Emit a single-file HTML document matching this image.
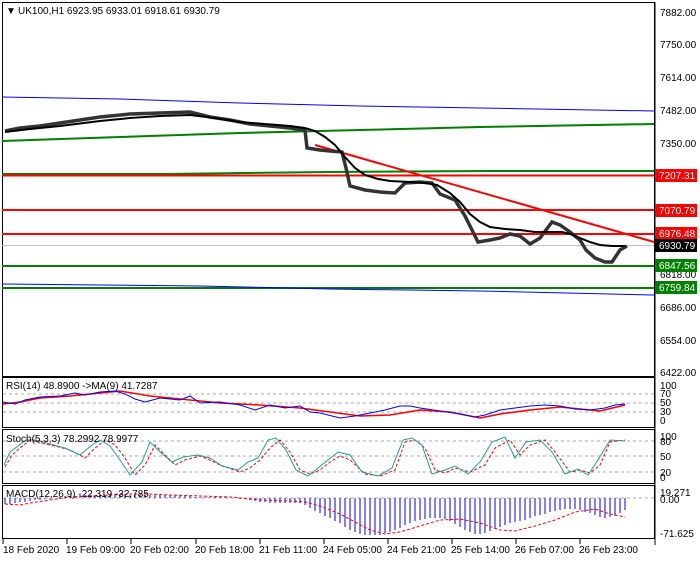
<!DOCTYPE html>
<html><head><meta charset="utf-8"><style>
body{margin:0;width:700px;height:560px;background:#fff;overflow:hidden;font-family:"Liberation Sans",sans-serif}
svg text{font-family:"Liberation Sans",sans-serif;font-size:10px}
</style></head><body>
<svg width="700" height="560" viewBox="0 0 700 560" xmlns="http://www.w3.org/2000/svg">
<rect width="700" height="560" fill="#fff"/>
<g fill="none" stroke="#000" stroke-width="1">
<rect x="2.5" y="2.5" width="652" height="374"/>
<rect x="2.5" y="377.5" width="652" height="50"/>
<rect x="2.5" y="429.5" width="652" height="54"/>
<rect x="2.5" y="485.5" width="652" height="53"/>
</g>
<polyline points="2,97 120,99 240,103 360,106 480,108 654,111" fill="none" stroke="#0000ff" stroke-width="1"/>
<polyline points="2,141 120,137 240,133 360,130 480,127 654,124" fill="none" stroke="#008000" stroke-width="2"/>
<polyline points="2,174 165,174 330,172 490,171 654,171" fill="none" stroke="#008000" stroke-width="2"/>
<line x1="2" y1="175.5" x2="654" y2="175.5" stroke="#ff0000" stroke-width="2"/>
<line x1="2" y1="210" x2="654" y2="210" stroke="#ff0000" stroke-width="2"/>
<line x1="2" y1="234" x2="654" y2="234" stroke="#ff0000" stroke-width="2"/>
<line x1="2" y1="245.5" x2="654" y2="245.5" stroke="#c0c0c0" stroke-width="1"/>
<line x1="2" y1="266" x2="654" y2="266" stroke="#008000" stroke-width="2"/>
<line x1="2" y1="288" x2="654" y2="288" stroke="#008000" stroke-width="2"/>
<polyline points="2,284 200,286 330,289 480,291 654,295" fill="none" stroke="#0000ff" stroke-width="1"/>
<line x1="315" y1="145" x2="654" y2="242" stroke="#ff0000" stroke-width="2"/>
<!-- price (candle band approximation) -->
<polyline points="5,131 20,128 40,126 60,123 80,120 100,117 130,114 160,113 190,112 210,117 230,120 250,124 270,126 290,128 305,130 307,148 320,150 330,151 342,152 346,168 350,186 365,190 380,192 395,193 405,183 420,182 432,183 440,194 455,200 465,216 472,230 478,242 490,240 500,238 510,234 520,236 530,244 540,238 552,222 560,225 570,232 580,240 586,250 595,258 605,262 612,262 620,250 627,246" fill="none" stroke="#333" stroke-width="3.5"/>
<polyline points="5,132 30,129 60,126 100,121 130,118 160,116 190,115 215,118 240,122 265,124 290,126 305,128 315,131 325,137 335,145 345,157 355,168 365,175 378,179 390,181 410,182 425,183 437,185 450,193 460,202 470,214 480,222 490,227 505,229 520,230 535,232 550,232 562,232 570,234 580,238 590,242 600,245 612,246 625,246" fill="none" stroke="#000" stroke-width="2"/>
<line x1="655" y1="2" x2="655" y2="545" stroke="#000"/>
<g fill="#000">
<text x="660" y="16">7882.00</text><text x="660" y="48">7750.00</text><text x="660" y="81">7614.00</text>
<text x="660" y="114">7482.00</text><text x="660" y="147">7350.00</text><text x="660" y="278">6818.00</text>
<text x="660" y="311">6686.00</text><text x="660" y="344">6554.00</text><text x="660" y="376">6422.00</text>
</g>
<rect x="655" y="169" width="42" height="13" fill="#ff0000"/><text x="659" y="179" fill="#fff">7207.31</text>
<rect x="655" y="204" width="42" height="13" fill="#ff0000"/><text x="659" y="214" fill="#fff">7070.79</text>
<rect x="655" y="227" width="42" height="13" fill="#ff0000"/><text x="659" y="237" fill="#fff">6976.48</text>
<rect x="655" y="239" width="42" height="13" fill="#000"/><text x="659" y="249" fill="#fff">6930.79</text>
<rect x="655" y="259" width="42" height="13" fill="#008000"/><text x="659" y="269" fill="#fff">6847.56</text>
<rect x="655" y="281" width="42" height="13" fill="#008000"/><text x="659" y="291" fill="#fff">6759.84</text>
<text x="6" y="14" font-size="7">▼</text>
<text x="18" y="14">UK100,H1  6923.95 6933.01 6918.61 6930.79</text>
<g stroke="#aaa" stroke-dasharray="3,3"><line x1="3" y1="394" x2="654" y2="394"/><line x1="3" y1="403" x2="654" y2="403"/><line x1="3" y1="412" x2="654" y2="412"/></g>
<polyline points="3,404 20,402 40,398 70,396 100,393 120,391 150,396 180,399 220,403 260,405 300,408 330,412 360,416 390,415 420,410 450,412 480,418 500,414 530,410 560,407 580,409 600,411 625,405" fill="none" stroke="#ff0000" stroke-width="1.5"/>
<polyline points="3,402 15,404 25,400 40,397 60,396 75,393 85,395 100,392 115,391 125,394 135,399 145,402 160,398 180,400 190,396 200,403 220,402 240,405 255,410 270,405 285,408 300,406 310,412 320,413 340,418 355,416 370,413 385,410 400,406 410,406 420,408 440,411 460,414 475,417 485,415 500,410 515,408 530,406 545,405 560,406 575,409 590,410 605,408 615,405 625,404" fill="none" stroke="#0000ff" stroke-width="1"/>
<text x="6" y="389">RSI(14) 48.8900  -&gt;MA(9) 41.7287</text>
<g><text x="660" y="389">100</text><text x="660" y="397">70</text><text x="660" y="406">50</text><text x="660" y="415">30</text><text x="660" y="424">0</text></g>
<g stroke="#aaa" stroke-dasharray="3,3"><line x1="3" y1="441" x2="654" y2="441"/><line x1="3" y1="456" x2="654" y2="456"/><line x1="3" y1="472" x2="654" y2="472"/></g>
<polyline points="5,467 12,455 20,448 30,440 40,443 55,446 70,450 85,458 95,448 105,440 115,445 125,458 135,475 145,465 155,445 165,455 175,465 185,460 200,456 210,460 220,465 240,472 250,468 260,460 270,448 280,440 290,452 300,470 310,474 320,470 330,462 340,456 350,460 365,474 380,476 395,470 405,442 415,440 425,448 435,470 445,473 455,468 470,472 485,465 495,448 510,440 520,455 530,445 545,440 555,452 570,472 580,470 590,473 600,465 610,442 625,440" fill="none" stroke="#ff0000" stroke-width="1" stroke-dasharray="3,2"/>
<polyline points="4,465 10,452 18,446 26,440 36,440 50,444 65,448 80,455 92,445 100,440 110,446 120,460 130,475 142,462 150,442 160,452 172,462 183,457 198,455 210,458 222,466 238,470 248,462 258,458 268,440 276,438 286,450 296,470 308,476 318,468 328,460 338,452 350,455 362,472 378,476 392,468 403,440 412,438 422,445 432,474 445,470 455,466 468,474 480,462 492,442 505,437 515,458 526,442 540,440 552,452 565,474 578,469 588,475 598,460 610,440 625,441" fill="none" stroke="#20a090" stroke-width="1"/>
<text x="6" y="442">Stoch(5,3,3) 78.2992 78.9977</text>
<g><text x="660" y="440">100</text><text x="660" y="445">80</text><text x="660" y="460">50</text><text x="660" y="476">20</text><text x="660" y="481">0</text></g>
<line x1="3" y1="498" x2="654" y2="498" stroke="#aaa" stroke-dasharray="3,3"/>
<g stroke="#0000ff" stroke-width="1">
<path d="M5 498V504M10 498V504M15 498V503M20 498V502M25 498V502M30 498V501M35 498V500M40 498V500M45 498V499M50 498V499M55 498V498M60 498V497M65 498V497M70 498V496M75 498V496M80 498V495M85 498V495M90 498V495M95 498V495M100 498V495M105 498V495M110 498V495M115 498V495M120 498V495M125 498V495M130 498V495M135 498V495M140 498V495M145 498V495M150 498V495M155 498V495M160 498V495M165 498V495M170 498V495M175 498V495M180 498V495M185 498V496M190 498V496M195 498V497M200 498V497M205 498V497M210 498V497M215 498V497M220 498V497M225 498V497M230 498V498M235 498V498M240 498V499M245 498V499M250 498V500M255 498V501M260 498V502M265 498V502M270 498V503M275 498V503M280 498V503M285 498V503M290 498V503M295 498V503M300 498V503M305 498V505M310 498V508M315 498V511M320 498V513M325 498V516M330 498V518M335 498V521M340 498V523M345 498V527M350 498V530M355 498V532M360 498V534M365 498V535M370 498V535M375 498V535M380 498V535M385 498V533M390 498V532M395 498V530M400 498V528M405 498V525M410 498V523M415 498V521M420 498V520M425 498V519M430 498V518M435 498V518M440 498V518M445 498V519M450 498V521M455 498V524M460 498V527M465 498V530M470 498V532M475 498V534M480 498V534M485 498V533M490 498V531M495 498V529M500 498V527M505 498V525M510 498V523M515 498V522M520 498V521M525 498V520M530 498V518M535 498V516M540 498V515M545 498V514M550 498V512M555 498V511M560 498V510M565 498V509M570 498V509M575 498V509M580 498V510M585 498V512M590 498V513M595 498V515M600 498V517M605 498V518M610 498V517M615 498V516M620 498V513M625 498V510"/>
</g>
<polyline points="5,504 20,505 30,503 50,500 70,497 90,496 110,495 130,494 150,494 170,495 200,496 230,497 260,500 290,501 305,502 320,506 340,514 355,522 370,530 385,534 400,532 420,526 440,520 460,519 480,523 500,530 515,531 535,526 555,520 575,512 595,509 610,514 625,517" fill="none" stroke="#ff0000" stroke-width="1" stroke-dasharray="3,2"/>
<text x="6" y="497">MACD(12,26,9) -22.319 -32.785</text>
<g><text x="660" y="496">19.271</text><text x="660" y="503">0.00</text><text x="660" y="537">-71.625</text></g>
<g stroke="#000"><line x1="3" y1="539" x2="3" y2="544"/><line x1="67" y1="539" x2="67" y2="544"/><line x1="131" y1="539" x2="131" y2="544"/><line x1="196" y1="539" x2="196" y2="544"/><line x1="260" y1="539" x2="260" y2="544"/><line x1="324" y1="539" x2="324" y2="544"/><line x1="388" y1="539" x2="388" y2="544"/><line x1="452" y1="539" x2="452" y2="544"/><line x1="516" y1="539" x2="516" y2="544"/><line x1="580" y1="539" x2="580" y2="544"/></g>
<g><text x="3" y="553">18 Feb 2020</text><text x="66" y="553">19 Feb 09:00</text><text x="130" y="553">20 Feb 02:00</text><text x="195" y="553">20 Feb 18:00</text><text x="259" y="553">21 Feb 11:00</text><text x="323" y="553">24 Feb 05:00</text><text x="387" y="553">24 Feb 21:00</text><text x="451" y="553">25 Feb 14:00</text><text x="515" y="553">26 Feb 07:00</text><text x="579" y="553">26 Feb 23:00</text></g>
</svg>
</body></html>
